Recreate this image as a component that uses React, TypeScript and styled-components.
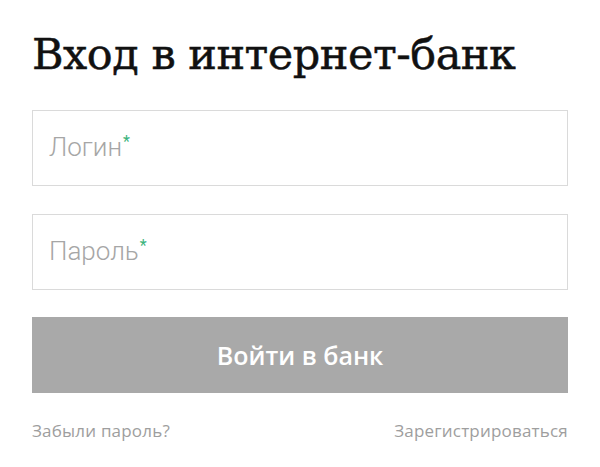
import React from "react";
import styled, { createGlobalStyle } from "styled-components";

const GlobalStyle = createGlobalStyle`
  html, body {
    margin: 0;
    padding: 0;
    background: #ffffff;
  }
`;

const Wrapper = styled.div`
  width: 600px;
  height: 467px;
  box-sizing: border-box;
  padding: 24px 32px 0;
  display: flex;
  flex-direction: column;
  font-family: Roboto, "Liberation Sans", sans-serif;
`;

const Title = styled.h1`
  margin: 0 0 26px;
  font-family: "DejaVu Serif", "Liberation Serif", serif;
  font-weight: 400;
  font-size: 43px;
  line-height: 60px;
  color: #111111;
  letter-spacing: -0.5px;
  -webkit-text-stroke: 0.5px #111111;
`;

const Field = styled.label<{ $gap: number }>`
  height: 76px;
  box-sizing: border-box;
  border: 1px solid #dadada;
  display: flex;
  align-items: center;
  padding: 0 16px;
  margin-bottom: ${(p) => p.$gap}px;
`;

const Placeholder = styled.span`
  font-size: 26px;
  font-weight: 300;
  color: #a6a6a6;
  margin-top: -2px;
`;

const Star = styled.sup`
  color: #3bb37c;
  font-size: 16px;
  font-weight: 400;
  vertical-align: 9px;
  margin-left: 1px;
`;

const Submit = styled.button`
  height: 76px;
  border: none;
  background: #a9a9a9;
  color: #ffffff;
  font-family: "Open Sans", Roboto, sans-serif;
  font-size: 25px;
  font-weight: 600;
  cursor: pointer;
  padding: 0;
`;

const Links = styled.div`
  display: flex;
  justify-content: space-between;
  margin-top: 27px;
`;

const LinkText = styled.a`
  font-family: "Open Sans", Roboto, sans-serif;
  font-size: 17px;
  letter-spacing: 0.2px;
  color: #9e9e9e;
  text-decoration: none;
  line-height: 22px;
`;

const App = () => {
  return (
    <>
      <GlobalStyle />
      <Wrapper>
        <Title>Вход в интернет-банк</Title>
        <Field $gap={28}>
          <Placeholder>
            Логин<Star>*</Star>
          </Placeholder>
        </Field>
        <Field $gap={27}>
          <Placeholder>
            Пароль<Star>*</Star>
          </Placeholder>
        </Field>
        <Submit>Войти в банк</Submit>
        <Links>
          <LinkText href="#">Забыли пароль?</LinkText>
          <LinkText href="#">Зарегистрироваться</LinkText>
        </Links>
      </Wrapper>
    </>
  );
};

export default App;
